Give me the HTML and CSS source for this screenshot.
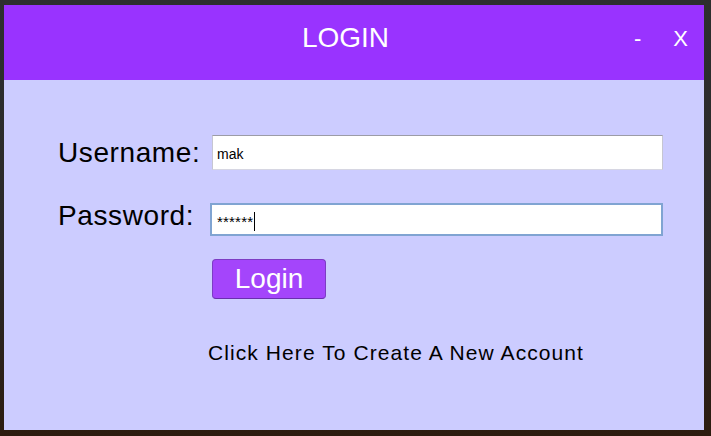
FILE: index.html
```html
<!DOCTYPE html>
<html lang="en">
<head>
<meta charset="utf-8">
<title>Login</title>
<link rel="stylesheet" href="styles.css">
</head>
<body>
  <div class="window">
    <div class="titlebar">
      <div class="title">LOGIN</div>
      <div class="controls">
        <span class="ctrl">-</span>
        <span class="ctrl">X</span>
      </div>
    </div>
    <div class="content">
      <label class="label">Username:</label>
      <div class="field field-user">mak</div>
      <label class="label label-pass">Password:</label>
      <div class="field field-pass">******<span class="caret"></span></div>
      <button class="btn" type="button">Login</button>
      <a class="link">Click Here To Create A New Account</a>
    </div>
  </div>
</body>
</html>
```

FILE: styles.css
```css
html, body {
  margin: 0;
  padding: 0;
}
body {
  width: 711px;
  height: 436px;
  overflow: hidden;
  background: linear-gradient(180deg, #2d2f2f 0%, #2a2827 60%, #2c1c10 100%);
  font-family: "Liberation Sans", Arial, sans-serif;
}
.window {
  margin: 5px 0 0 4px;
  width: 700px;
  height: 425px;
  display: flex;
  flex-direction: column;
}
.titlebar {
  height: 75px;
  flex: none;
  background: #9933ff;
  color: #ffffff;
  display: flex;
  align-items: flex-start;
  padding-right: 16px;
}
.title {
  flex: 1;
  text-align: center;
  padding: 17px 0 0 53px;
  font-size: 28px;
  line-height: 32px;
}
.controls {
  display: flex;
  gap: 32px;
  margin-top: 21px;
  font-size: 22px;
  line-height: 26px;
}
.content {
  flex: 1;
  background: #ccccff;
  padding: 55px 0 0 54px;
  display: grid;
  grid-template-columns: 152px 453px;
  align-content: start;
  align-items: start;
}
.label {
  font-size: 28px;
  line-height: 35px;
  letter-spacing: 0.6px;
  color: #000000;
}
.field {
  box-sizing: border-box;
  background: #ffffff;
  font-size: 14px;
  line-height: 16px;
  color: #000000;
  white-space: nowrap;
}
.field-user {
  margin-left: 2px;
  height: 35px;
  border: 1px solid;
  border-color: #9c9ca6 #c6c6d2 #d6d6e2 #c6c6d2;
  padding: 10px 0 0 4px;
}
.label-pass {
  margin-top: 29px;
  line-height: 33px;
}
.field-pass {
  margin-top: 33px;
  height: 33px;
  border: 2px solid #80a4d2;
  padding: 7px 0 0 5px;
  font-size: 15px;
  line-height: 16px;
  letter-spacing: 0.2px;
}
.caret {
  display: inline-block;
  width: 1px;
  height: 19px;
  background: #000000;
  vertical-align: -4px;
  margin-left: 1px;
}
.btn {
  grid-column: 2;
  justify-self: start;
  margin: 23px 0 0 2px;
  width: 114px;
  height: 40px;
  box-sizing: border-box;
  padding: 0;
  border: 1px solid #7d3cc4;
  border-bottom-color: #6a2fae;
  border-radius: 4px;
  background: #a445fb;
  color: #ffffff;
  font-family: "Liberation Sans", Arial, sans-serif;
  font-size: 28px;
  line-height: 38px;
  text-align: center;
}
.link {
  grid-column: 2;
  margin: 42px 0 0 -2px;
  font-size: 21px;
  line-height: 24px;
  letter-spacing: 1.08px;
  color: #000000;
  white-space: nowrap;
}
```
